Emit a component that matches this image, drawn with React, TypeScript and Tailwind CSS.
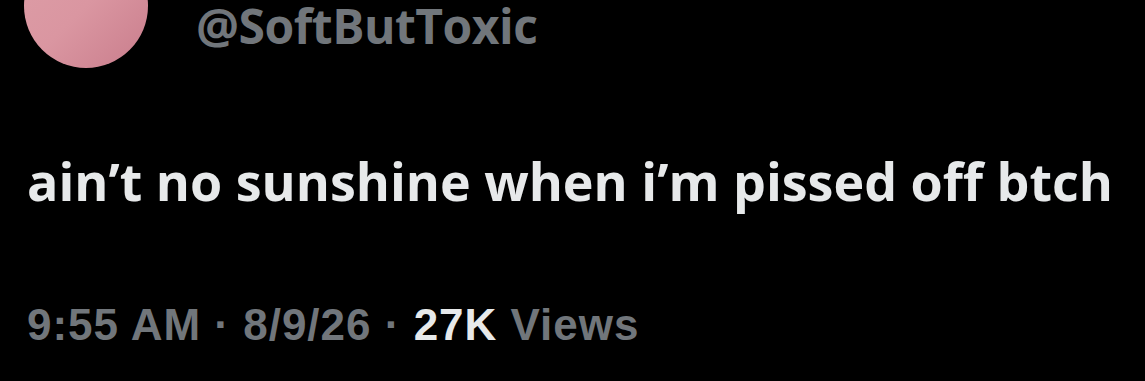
export default function App() {
  return (
    <div className="w-[1145px] h-[381px] bg-black overflow-hidden relative">
      <div className="flex items-start gap-[48px] pl-[24px]">
        <div className="w-[124px] h-[124px] -mt-[56px] rounded-full bg-gradient-to-br from-[#dd9ea7] via-[#da96a1] to-[#c97d8c] shrink-0" />
        <div
          className="pt-[2px] text-[48px] font-bold leading-[48px] tracking-[-0.5px] text-[#71767b] whitespace-nowrap"
          style={{ fontFamily: '"Open Sans", sans-serif' }}
        >
          @SoftButToxic
        </div>
      </div>
      <div
        className="mt-[83px] pl-[27px] text-[52px] font-bold leading-[60px] text-[#e7e9ea]"
        style={{ fontFamily: '"Open Sans", sans-serif' }}
      >
        ain’t no sunshine when i’m pissed off btch
      </div>
      <div
        className="mt-[89px] pl-[27px] text-[44px] font-bold leading-[50px] tracking-[1px] text-[#71767b]"
        style={{ fontFamily: '"Liberation Sans", sans-serif' }}
      >
        9:55 AM · 8/9/26 · <span className="text-[#e7e9ea]">27K</span> Views
      </div>
    </div>
  );
}
